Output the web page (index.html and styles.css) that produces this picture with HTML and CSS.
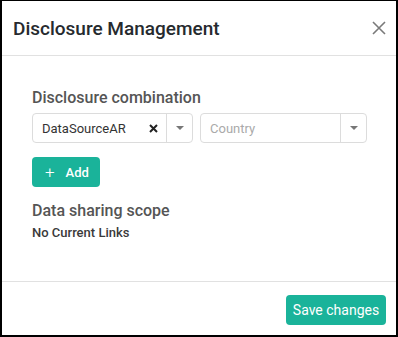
FILE: index.html
```html
<!DOCTYPE html>
<html lang="en">
<head>
    <meta charset="UTF-8">
    <title>Disclosure Management</title>
    <link rel="stylesheet" href="styles.css">
</head>
<body>
    <div class="modal">
        <div class="modal-header">
            <h1 class="modal-title">Disclosure Management</h1>
            <button class="close-button" aria-label="Close">
                <svg width="14" height="14" viewBox="0 0 14 14"><path d="M1 1 L13 13 M13 1 L1 13" stroke="#7a7a7a" stroke-width="1.6" fill="none"/></svg>
            </button>
        </div>

        <div class="modal-body">
            <h2 class="section-label">Disclosure combination</h2>
            <div class="select-row">
                <div class="select select-source">
                    <span class="select-value">DataSourceAR</span>
                    <span class="select-clear">
                        <svg width="9" height="9" viewBox="0 0 9 9"><path d="M1 1 L8 8 M8 1 L1 8" stroke="#222" stroke-width="2" fill="none"/></svg>
                    </span>
                    <span class="select-arrow"><span class="caret"></span></span>
                </div>
                <div class="select select-country">
                    <span class="select-value placeholder">Country</span>
                    <span class="select-arrow"><span class="caret"></span></span>
                </div>
            </div>
            <button class="btn btn-add"><span class="plus">+</span>Add</button>

            <h2 class="section-label scope-label">Data sharing scope</h2>
            <p class="no-links">No Current Links</p>
        </div>

        <div class="modal-footer">
            <button class="btn btn-save">Save changes</button>
        </div>
    </div>
</body>
</html>
```

FILE: styles.css
```css
body {
    margin: 0;
    font-family: Roboto, "Liberation Sans", Arial, sans-serif;
    background-color: #fff;
}

.modal {
    width: 398px;
    height: 337px;
    box-sizing: border-box;
    border-style: solid;
    border-color: #000;
    border-width: 1px 2px 2px 2px;
    display: flex;
    flex-direction: column;
    background-color: #fff;
}

.modal-header {
    height: 54px;
    border-bottom: 1px solid #e1e1e1;
    display: flex;
    align-items: center;
    justify-content: space-between;
    padding: 0 10px 0 11px;
}

.modal-title {
    margin: 0;
    font-size: 19px;
    font-weight: 500;
    color: #262a2e;
}

.close-button {
    background: none;
    border: none;
    padding: 0;
    width: 14px;
    height: 14px;
    cursor: pointer;
}

.modal-body {
    flex: 1;
    padding: 32px 29px 0 30px;
}

.section-label {
    margin: 0;
    font-size: 16px;
    font-weight: 500;
    line-height: 1.2;
    color: #555;
}

.select-row {
    display: flex;
    gap: 7px;
    margin-top: 6px;
}

.select {
    height: 30px;
    box-sizing: border-box;
    border: 1px solid #dcdcdc;
    border-radius: 4px;
    display: flex;
    align-items: center;
    font-size: 13px;
    color: #333;
}

.select-source {
    width: 161px;
}

.select-country {
    width: 167px;
}

.select-value {
    flex: 1;
    padding-left: 9px;
}

.placeholder {
    color: #aaa;
}

.select-clear {
    width: 14px;
    display: flex;
    align-items: center;
    padding-right: 3px;
}

.select-arrow {
    width: 25px;
    height: 100%;
    border-left: 1px solid #dcdcdc;
    display: flex;
    align-items: center;
    justify-content: center;
}

.caret {
    width: 0;
    height: 0;
    border-left: 4px solid transparent;
    border-right: 4px solid transparent;
    border-top: 4px solid #777;
}

.btn {
    background-color: #1ab39a;
    color: #fff;
    border: none;
    border-radius: 4px;
    font-family: inherit;
    cursor: pointer;
}

.btn-add {
    margin-top: 14px;
    width: 68px;
    height: 30px;
    font-size: 13px;
    font-weight: 500;
    display: flex;
    align-items: center;
    padding: 0 0 0 13px;
}

.plus {
    font-size: 17px;
    font-weight: 300;
    margin-right: 11px;
}

.scope-label {
    margin-top: 14px;
}

.no-links {
    margin: 5px 0 0 0;
    font-size: 13px;
    font-weight: 500;
    line-height: 1.2;
    color: #3a3a3a;
}

.modal-footer {
    height: 54px;
    border-top: 1px solid #e1e1e1;
    display: flex;
    justify-content: flex-end;
    padding: 13px 10px 0 0;
    box-sizing: border-box;
}

.btn-save {
    width: 100px;
    height: 30px;
    font-size: 14px;
}
```
